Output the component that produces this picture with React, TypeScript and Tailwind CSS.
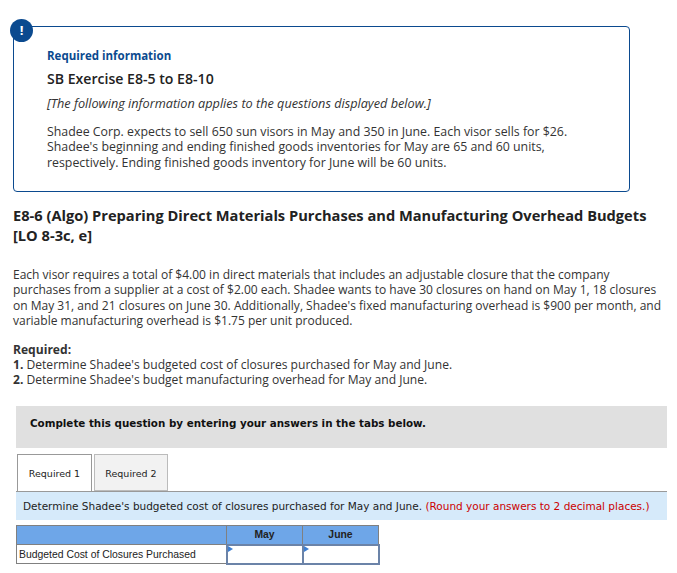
export default function App() {
  const body = "font-['Open_Sans','Lato',sans-serif]";
  return (
    <div className={`w-[677px] h-[573px] overflow-hidden bg-white text-[#333] ${body}`}>
      <div className="pt-[26px] pl-[13px]">
        <div className="relative w-[617px] h-[166px] rounded-[4px] border border-[#0b4a8f] pl-[33px] pt-[20px]">
          <div className="absolute left-[-4px] top-[-8px] w-[23px] h-[23px] rounded-full bg-[#0b4a8f] flex items-center justify-center text-white text-[13px] font-bold leading-none">!</div>
          <div className="text-[11.5px] leading-[17px] font-bold text-[#0b4a8f]">Required information</div>
          <div className="mt-[6px] text-[14.1px] leading-[18px] font-semibold text-[#222]">SB Exercise E8-5 to E8-10</div>
          <div className="mt-[6px] text-[12.7px] leading-[18px] italic">[The following information applies to the questions displayed below.]</div>
          <div className="mt-[12px] text-[12.35px] leading-[15.33px] whitespace-nowrap">
            <div>Shadee Corp. expects to sell 650 sun visors in May and 350 in June. Each visor sells for $26.</div>
            <div>Shadee's beginning and ending finished goods inventories for May are 65 and 60 units,</div>
            <div>respectively. Ending finished goods inventory for June will be 60 units.</div>
          </div>
        </div>
      </div>
      <div className="pl-[13px] mt-[13px] text-[14.65px] leading-[20px] font-bold text-[#222] whitespace-nowrap">
        <div>E8-6 (Algo) Preparing Direct Materials Purchases and Manufacturing Overhead Budgets</div>
        <div>[LO 8-3c, e]</div>
      </div>
      <div className="pl-[13px] mt-[22px] text-[12.03px] leading-[15.33px] whitespace-nowrap">
        <div>Each visor requires a total of $4.00 in direct materials that includes an adjustable closure that the company</div>
        <div>purchases from a supplier at a cost of $2.00 each. Shadee wants to have 30 closures on hand on May 1, 18 closures</div>
        <div>on May 31, and 21 closures on June 30. Additionally, Shadee's fixed manufacturing overhead is $900 per month, and</div>
        <div>variable manufacturing overhead is $1.75 per unit produced.</div>
      </div>
      <div className="pl-[13px] mt-[14px] text-[12.08px] leading-[15px] whitespace-nowrap">
        <div className="font-bold">Required:</div>
        <div><span className="font-bold">1.</span> Determine Shadee's budgeted cost of closures purchased for May and June.</div>
        <div><span className="font-bold">2.</span> Determine Shadee's budget manufacturing overhead for May and June.</div>
      </div>
      <div className="ml-[16px] mr-[10px] mt-[19px] h-[42px] bg-[#e0e0e0] pl-[14px] pt-[10px] font-['DejaVu_Sans',sans-serif] text-[10.33px] leading-[14px] font-bold text-[#111]">
        Complete this question by entering your answers in the tabs below.
      </div>
      <div className="ml-[17px] mt-[6px] h-[37px] flex gap-[2px] font-['DejaVu_Sans',sans-serif] text-[9.5px] text-[#222]">
        <div className="w-[75px] h-[37px] pt-[2px] bg-white border border-b-0 border-[#999] flex items-center justify-center">Required 1</div>
        <div className="w-[74px] h-[37px] pt-[2px] bg-[#f2f2f2] border border-[#bbb] flex items-center justify-center">Required 2</div>
      </div>
      <div className="ml-[16px] mr-[10px] h-[29px] bg-[#d6eafa] border-t border-[#999] pl-[7px] pt-[1px] flex items-center font-['DejaVu_Sans',sans-serif] text-[10.5px] text-[#222] whitespace-nowrap">
        Determine Shadee's budgeted cost of closures purchased for May and June.&nbsp;<span className="text-[#c00]">(Round your answers to 2 decimal places.)</span>
      </div>
      <table className="ml-[16px] mt-[5px] w-[363px] border-collapse table-fixed font-['Liberation_Sans',sans-serif] text-[10.4px]">
        <tbody>
          <tr className="h-[19px] bg-[#6ea6e8] font-bold text-center text-[#222]">
            <td className="w-[210px] border border-[#808080]"></td>
            <td className="w-[76px] border border-[#808080]">May</td>
            <td className="w-[76px] border border-[#808080]">June</td>
          </tr>
          <tr className="h-[19px] text-[#222]">
            <td className="border border-[#808080] pl-[2px] whitespace-nowrap">Budgeted Cost of Closures Purchased</td>
            <td className="relative border-2 border-[#6b83a8] bg-white">
              <svg className="absolute left-0 top-0" width="6" height="6" viewBox="0 0 6 6"><polygon points="0,0 5,3 0,6" fill="#3f7fd0" /></svg>
            </td>
            <td className="relative border-2 border-[#6b83a8] bg-white">
              <svg className="absolute left-0 top-0" width="6" height="6" viewBox="0 0 6 6"><polygon points="0,0 5,3 0,6" fill="#3f7fd0" /></svg>
            </td>
          </tr>
        </tbody>
      </table>
    </div>
  );
}
